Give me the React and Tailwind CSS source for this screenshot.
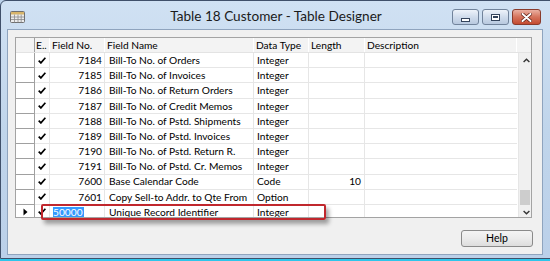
import React from "react";

const rows = [
  ["7184", "Bill-To No. of Orders", "Integer", ""],
  ["7185", "Bill-To No. of Invoices", "Integer", ""],
  ["7186", "Bill-To No. of Return Orders", "Integer", ""],
  ["7187", "Bill-To No. of Credit Memos", "Integer", ""],
  ["7188", "Bill-To No. of Pstd. Shipments", "Integer", ""],
  ["7189", "Bill-To No. of Pstd. Invoices", "Integer", ""],
  ["7190", "Bill-To No. of Pstd. Return R.", "Integer", ""],
  ["7191", "Bill-To No. of Pstd. Cr. Memos", "Integer", ""],
  ["7600", "Base Calendar Code", "Code", "10"],
  ["7601", "Copy Sell-to Addr. to Qte From", "Option", ""],
];

const Check = () => (
  <svg width="8" height="7" viewBox="0 0 8 7">
    <path d="M0.7 3.6 L2.9 5.9 L7.4 0.7" fill="none" stroke="#000" strokeWidth="1.7" />
  </svg>
);

function TitleIcon() {
  return (
    <svg width="15" height="12" viewBox="0 0 15 12">
      <rect x="0.5" y="0.5" width="14" height="11" rx="1" fill="#ececec" stroke="#707070" />
      <rect x="1" y="1" width="13" height="2.5" fill="#d8b56a" />
      <path d="M1 6h13M1 8.5h13M4.5 3.5v8M8 3.5v8M11.2 3.5v8" stroke="#8a8a8a" strokeWidth="0.8" />
    </svg>
  );
}

function WinButton({ children, close }) {
  return (
    <div
      className={
        "h-[16px] rounded-[3px] border flex items-center justify-center " +
        (close
          ? "w-[29px] border-[#8a3b2c] bg-gradient-to-b from-[#eab0a2] via-[#d5735c] to-[#c44b31]"
          : "w-[27px] border-[#71839b] bg-gradient-to-b from-[#eef3fa] via-[#d0dcec] to-[#b8c9df]")
      }
    >
      {children}
    </div>
  );
}

const cell = "border-r border-b border-[#e6e6e6] flex items-center";

export default function App() {
  const sans = { fontFamily: 'Lato, "Noto Sans", sans-serif' };
  return (
    <div className="w-[550px] h-[261px] overflow-hidden bg-[#bcd2ea] relative" style={sans}>
      <div className="absolute left-0 top-0 w-[556px] h-[259px] rounded-t-[6px] border border-[#40506a] bg-gradient-to-b from-[#d0e1f3] via-[#c0d5eb] to-[#bbd0e9] flex flex-col">
        {/* title bar */}
        <div className="h-[28px] flex items-center relative shrink-0">
          <div className="ml-[9px] mt-[4px]">
            <TitleIcon />
          </div>
          <div className="absolute left-0 w-[550px] top-[6px] text-center text-[13.6px] leading-[18px] text-[#1b1b1b]">
            Table 18 Customer - Table Designer
          </div>
          <div className="absolute top-[8px] left-[451px] flex gap-[3px]">
            <WinButton>
              <div className="w-[9px] h-[4px] bg-white border border-[#34445c] mt-[6px]" />
            </WinButton>
            <WinButton>
              <div className="w-[9px] h-[7px] bg-white border border-[#34445c] flex items-center justify-center">
                <div className="w-[5px] h-[2px] border border-[#34445c] bg-[#cfdcec]" />
              </div>
            </WinButton>
            <WinButton close>
              <svg width="11" height="9" viewBox="0 0 11 9">
                <path d="M1.5 1 L9.5 8 M9.5 1 L1.5 8" stroke="#5a1c12" strokeWidth="3.4" strokeLinecap="round" />
                <path d="M1.5 1 L9.5 8 M9.5 1 L1.5 8" stroke="#ffffff" strokeWidth="2" strokeLinecap="round" />
              </svg>
            </WinButton>
          </div>
        </div>
        {/* content */}
        <div className="ml-[6px] w-[536px] h-[226px] border border-[#8fa4be] bg-[#f0f0f0] relative">
          {/* grid */}
          <div className="absolute left-[7px] top-[7px] w-[517px] h-[181px] border border-[#a3a3a3] bg-white text-[10.2px] text-black leading-none overflow-hidden whitespace-nowrap">
            {/* header */}
            <div className="flex h-[15px] bg-[#f3f3f3] border-b border-[#e3e3e3]">
              <div className="w-[19px] border-r border-[#a0a0a0]" />
              <div className="w-[15px] border-r border-white pl-[1px] flex items-center">E..</div>
              <div className="w-[55px] border-r border-white pl-[2px] flex items-center">Field No.</div>
              <div className="w-[149px] border-r border-white pl-[2px] flex items-center">Field Name</div>
              <div className="w-[55px] border-r border-white pl-[2px] flex items-center">Data Type</div>
              <div className="w-[56px] border-r border-white pl-[2px] flex items-center">Length</div>
              <div className="w-[152px] border-r border-white pl-[2px] flex items-center">Description</div>
              <div className="flex-1" />
            </div>
            <div className="flex">
              <div className="flex flex-col w-[502px]">
                {rows.map((r, i) => (
                  <div key={i} className="flex h-[15.2px]">
                    <div className="w-[19px] border-r border-b border-[#a0a0a0] bg-white" />
                    <div className={"w-[15px] justify-center " + cell}>
                      <Check />
                    </div>
                    <div className={"w-[55px] pr-[2px] justify-end " + cell}>{r[0]}</div>
                    <div className={"w-[149px] pl-[4px] " + cell}>{r[1]}</div>
                    <div className={"w-[55px] pl-[3px] " + cell}>{r[2]}</div>
                    <div className={"w-[56px] pr-[3px] justify-end " + cell}>{r[3]}</div>
                    <div className="w-[152px] border-b border-[#e6e6e6]" />
                  </div>
                ))}
                <div className="flex h-[15.2px]">
                  <div className="w-[19px] border-r border-b border-[#a0a0a0] bg-white flex items-center justify-center">
                    <svg width="5" height="8" viewBox="0 0 5 8">
                      <path d="M0.5 0.5 L4.5 4 L0.5 7.5 Z" fill="#000" />
                    </svg>
                  </div>
                  <div className={"w-[15px] justify-center " + cell}>
                    <Check />
                  </div>
                  <div className={"w-[55px] pl-[3px] " + cell}>
                    <span className="bg-[#3399ff] text-white h-[10px] flex items-center pr-[1px]">50000</span>
                  </div>
                  <div className={"w-[149px] pl-[4px] " + cell}>Unique Record Identifier</div>
                  <div className={"w-[55px] pl-[3px] " + cell}>Integer</div>
                  <div className={"w-[56px] " + cell} />
                  <div className="w-[152px] border-b border-[#e6e6e6]" />
                </div>
              </div>
              {/* scrollbar */}
              <div className="flex-1 bg-[#f0f0f0] border-l border-[#e6e6e6] h-[167px] relative">
                <svg className="absolute left-[4px] top-[5px]" width="7" height="5" viewBox="0 0 7 5">
                  <path d="M0.6 4 L3.5 1.2 L6.4 4" fill="none" stroke="#333" strokeWidth="1.4" />
                </svg>
                <div className="absolute left-[1px] right-[1px] top-[137px] h-[15px] bg-[#cdcdcd]" />
                <svg className="absolute left-[4px] top-[157px]" width="7" height="5" viewBox="0 0 7 5">
                  <path d="M0.6 1 L3.5 3.8 L6.4 1" fill="none" stroke="#333" strokeWidth="1.4" />
                </svg>
              </div>
            </div>
          </div>
          {/* annotation box */}
          <div className="absolute left-[33px] top-[174px] w-[285px] h-[16px] border-2 border-[#c0272d] rounded-[2px] shadow-[3px_4px_4px_rgba(0,0,0,0.35)]" />
          {/* help button */}
          <div className="absolute left-[453px] top-[200px] w-[72px] h-[17px] rounded-[3px] border border-[#8a8a8a] bg-gradient-to-b from-[#f4f4f4] via-[#ebebeb] to-[#dddddd] flex items-center justify-center text-[10.5px] text-black">
            Help
          </div>
        </div>
      </div>
      <div className="absolute left-0 bottom-0 w-[550px] h-[2px] bg-[#2ec5ea]" />
    </div>
  );
}
